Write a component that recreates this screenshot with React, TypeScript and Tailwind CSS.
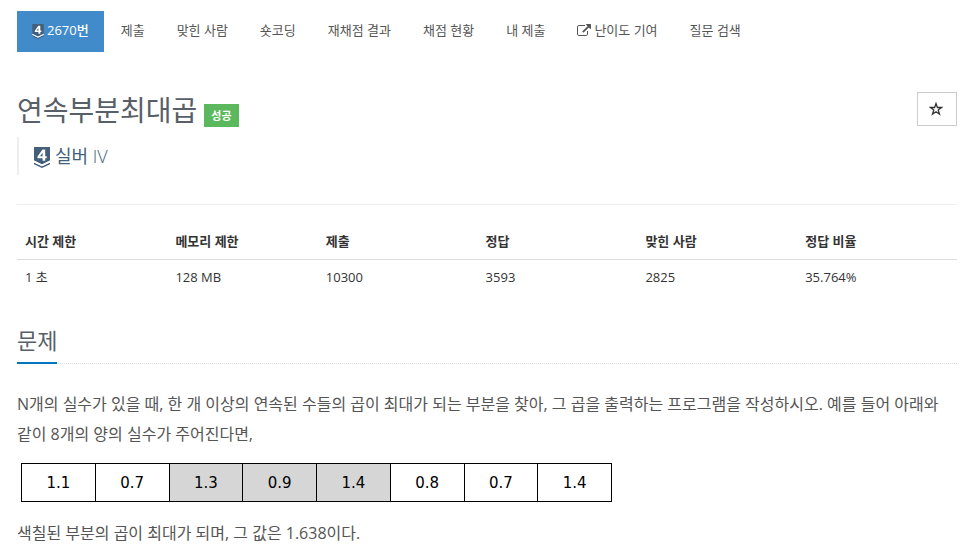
import React from "react";

const tabs = [
  "제출",
  "맞힌 사람",
  "숏코딩",
  "재채점 결과",
  "채점 현황",
  "내 제출",
  "난이도 기여",
  "질문 검색",
];

const info = [
  { label: "시간 제한", value: "1 초", width: "w-[16%]" },
  { label: "메모리 제한", value: "128 MB", width: "w-[16%]" },
  { label: "제출", value: "10300", width: "w-[17%]" },
  { label: "정답", value: "3593", width: "w-[17%]" },
  { label: "맞힌 사람", value: "2825", width: "w-[17%]" },
  { label: "정답 비율", value: "35.764%", width: "w-[17%]" },
];

const numbers = [
  { value: "1.1", filled: false },
  { value: "0.7", filled: false },
  { value: "1.3", filled: true },
  { value: "0.9", filled: true },
  { value: "1.4", filled: true },
  { value: "0.8", filled: false },
  { value: "0.7", filled: false },
  { value: "1.4", filled: false },
];

const TierBadge = ({ className }: { className: string }) => (
  <svg viewBox="0 0 16 21" className={className} aria-hidden="true">
    <path d="M0 0H16V13.500L8 17.500L0 13.500Z" fill="#435f7a" />
    <path d="M0 15.500L8 19.200L16 15.500V17.200L8 21L0 17.200Z" fill="#435f7a" />
    <path d="M0 13.500L8 17.500L16 13.500V15.500L8 19.200L0 15.500Z" fill="#fff" />
    <path
      d="M8.500 2.500H11.200V9.200H12.700V11.300H11.200V13.800H8.600V11.300H3.500V9.400ZM8.600 5.800L6 9.200H8.600Z"
      fill="#fff"
      fillRule="evenodd"
    />
  </svg>
);

const ExternalLinkIcon = () => (
  <svg viewBox="0 0 1792 1792" className="h-[14px] w-[14px]" fill="currentColor" aria-hidden="true">
    <path d="M1408 928v320q0 119-84.5 203.5T1120 1536H288q-119 0-203.500-84.500T0 1248V416q0-119 84.500-203.500T288 128h704q14 0 23 9t9 23v64q0 14-9 23t-23 9H288q-66 0-113 47t-47 113v832q0 66 47 113t113 47h832q66 0 113-47t47-113V928q0-14 9-23t23-9h64q14 0 23 9t9 23zm384-864v512q0 26-19 45t-45 19-45-19l-176-176-652 652q-10 10-23 10t-23-10L695 983q-10-10-10-23t10-23l652-652-176-176q-19-19-19-45t19-45 45-19h512q26 0 45 19t19 45z" />
  </svg>
);

const StarIcon = () => (
  <svg viewBox="0 0 14 14" className="h-[14px] w-[14px]" fill="none" stroke="currentColor" strokeWidth="1.3" aria-hidden="true">
    <path d="M7 1.500L8.400 5.500H12.600L9.200 8L10.500 12.200L7 9.700L3.500 12.200L4.800 8L1.400 5.500H5.600Z" />
  </svg>
);

const App = () => {
  return (
    <main className="pl-[17px] pr-[13px] pt-[11px] pb-4 font-['Open_Sans','Noto_Sans_CJK_KR',sans-serif] text-[13px] leading-5 text-[#333]">
      {/* Tabs */}
      <nav className="flex flex-wrap gap-[2px] text-[#555]">
        <a
          href="#problem"
          className="flex items-center gap-[3px] bg-[#428bca] px-[15px] pt-[9px] pb-[11px] font-medium leading-[21px] text-white"
        >
          <TierBadge className="mt-[2px] h-[15px] w-[12px]" />
          2670번
        </a>
        {tabs.map((tab) => (
          <a
            key={tab}
            href="#"
            className="flex items-center gap-[3px] px-[15px] pt-[9px] pb-[11px] leading-[21px]"
          >
            {tab === "난이도 기여" && <ExternalLinkIcon />}
            {tab}
          </a>
        ))}
      </nav>

      {/* Title */}
      <header id="problem" className="mt-10 flex items-start justify-between border-b border-[#eee] pb-[29px]">
        <div>
          <div className="flex items-center gap-[7px]">
            <h1 className="text-[28px] leading-[34px] text-[#585f69]">연속부분최대곱</h1>
            <span className="mt-3 bg-[#5cb85c] px-[7px] text-[11px] font-bold leading-[23px] text-white">
              성공
            </span>
          </div>
          <div className="mt-[10px] flex items-center gap-[5px] border-l-2 border-[#eee] pl-[15px] text-[18px] leading-[38px] text-[#435f7a]">
            <TierBadge className="mt-[2px] h-[21px] w-4" />
            <span>
              실버 <span className="font-light">IV</span>
            </span>
          </div>
        </div>
        <button
          type="button"
          aria-label="즐겨찾기"
          className="flex h-[34px] w-10 items-center justify-center border border-[#ccc] bg-white pr-[2px]"
        >
          <StarIcon />
        </button>
      </header>

      {/* Limits and stats */}
      <table className="mt-5 w-full table-fixed text-left">
        <thead>
          <tr className="border-b border-[#ddd]">
            {info.map((item) => (
              <th key={item.label} className={`${item.width} px-2 pt-[6px] pb-2 font-bold`}>
                {item.label}
              </th>
            ))}
          </tr>
        </thead>
        <tbody>
          <tr>
            {info.map((item) => (
              <td key={item.label} className="px-2 pt-[7px] pb-2">
                {item.value}
              </td>
            ))}
          </tr>
        </tbody>
      </table>

      {/* Description */}
      <section>
        <div className="mt-7 flex border-b border-dotted border-[#ddd]">
          <h2 className="-mb-px border-b-2 border-[#0076c0] pb-1 text-[22px] leading-[35px] text-[#585f69]">
            문제
          </h2>
        </div>
        <div className="mt-[25px] text-[16px] leading-[30px] text-[#555]">
          <p>
            N개의 실수가 있을 때, 한 개 이상의 연속된 수들의 곱이 최대가 되는 부분을 찾아, 그 곱을
            출력하는 프로그램을 작성하시오. 예를 들어 아래와 같이 8개의 양의 실수가 주어진다면,
          </p>
          <table className="mx-1 mt-[14px] w-full max-w-[591px] table-fixed border-collapse text-center font-['DejaVu_Sans',sans-serif] text-[15px] text-black">
            <tbody>
              <tr>
                {numbers.map((item, index) => (
                  <td
                    key={index}
                    className={`h-[38px] border border-black leading-5 ${item.filled ? "bg-[#d6d6d6]" : ""}`}
                  >
                    {item.value}
                  </td>
                ))}
              </tr>
            </tbody>
          </table>
          <p className="mt-4">색칠된 부분의 곱이 최대가 되며, 그 값은 1.638이다.</p>
        </div>
      </section>
    </main>
  );
};

export default App;
